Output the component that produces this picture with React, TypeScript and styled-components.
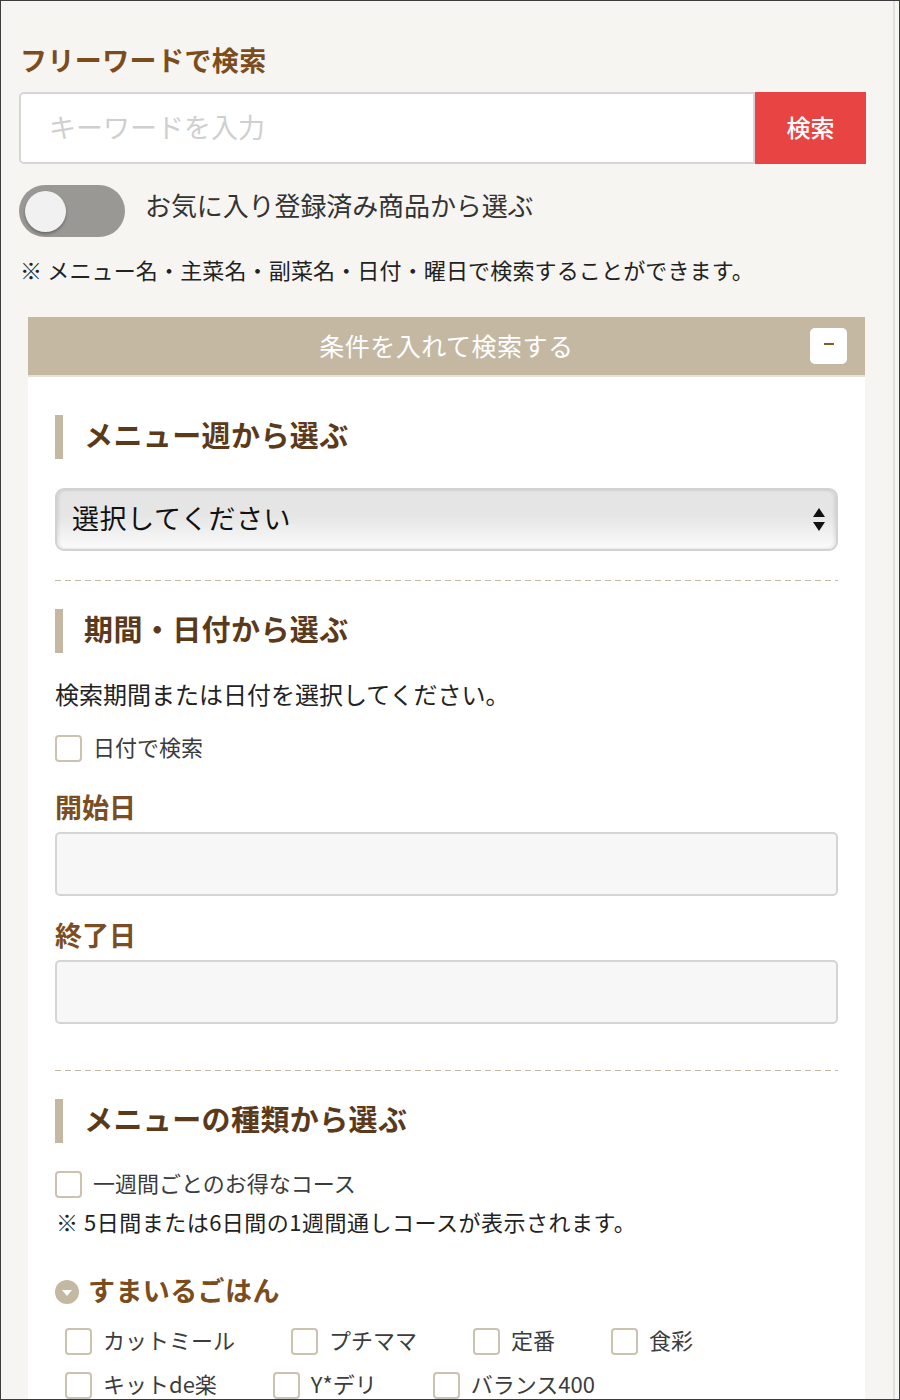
import React from "react";
import styled, { createGlobalStyle } from "styled-components";

const Global = createGlobalStyle`
  html, body { margin: 0; padding: 0; background: #f6f5f1; }
  * { box-sizing: border-box; }
  body { font-family: "Noto Sans CJK JP", "Noto Sans", sans-serif; color: #222; }
`;

const FONT = `"Noto Sans CJK JP", "Noto Sans", sans-serif`;

const Frame = styled.div`
  width: 900px;
  height: 1400px;
  border: 1px solid #3c3c3c;
  background: #f6f5f1;
  overflow: hidden;
  display: flex;
`;

const Content = styled.div`
  flex: 1;
  margin-right: 4px;
  border-right: 2px solid #e3e1dc;
  display: flex;
  flex-direction: column;
`;

const Top = styled.div`
  padding: 42px 27px 0 18px;
  display: flex;
  flex-direction: column;
`;

const Title = styled.h2`
  margin: 0;
  font: 700 27px/34px ${FONT};
  color: #7b4d1d;
  padding-left: 1px;
  letter-spacing: 0.4px;
`;

const SearchRow = styled.div`
  margin-top: 15px;
  display: flex;
  height: 72px;
`;

const KeywordInput = styled.input`
  flex: 1;
  min-width: 0;
  height: 72px;
  border: 2px solid #d6d6d6;
  border-radius: 5px 0 0 5px;
  background: #fff;
  padding: 0 0 4px 28px;
  font: 400 27px ${FONT};
  color: #333;
  outline: none;
  &::placeholder { color: #cfcfcf; }
`;

const SearchButton = styled.button`
  width: 111px;
  height: 72px;
  border: none;
  background: #e84444;
  color: #fff;
  font: 500 24px ${FONT};
  padding: 0 0 4px;
`;

const ToggleRow = styled.label`
  margin-top: 21px;
  display: flex;
  align-items: flex-start;
  gap: 20px;
  color: #333;
`;

const ToggleText = styled.span`
  font: 400 26px/40px ${FONT};
  letter-spacing: -0.1px;
`;

const Toggle = styled.span`
  width: 106px;
  height: 52px;
  border-radius: 26px;
  background: #9a9894;
  display: flex;
  align-items: center;
  padding-left: 6px;
  flex-shrink: 0;
`;

const Knob = styled.span`
  width: 41px;
  height: 41px;
  border-radius: 50%;
  background: #f1f1f1;
  box-shadow: 0 2px 3px rgba(0, 0, 0, 0.3);
`;

const Note = styled.p<{ $top?: number; $spacing?: number }>`
  margin: ${(p) => p.$top ?? 18}px 0 0;
  font: 400 22px/28px ${FONT};
  padding-bottom: 4px;
  letter-spacing: ${(p) => p.$spacing ?? 0.15}px;
  color: #222;
  padding-left: 1px;
`;

const Panel = styled.section`
  margin: 30px 28px 0 27px;
  background: #fff;
  flex: 1;
  display: flex;
  flex-direction: column;
`;

const PanelHeader = styled.div`
  height: 60px;
  background: #c4b8a3;
  border-bottom: 2px solid #e6e2da;
  display: flex;
  align-items: center;
  justify-content: center;
  position: relative;
  color: #fff;
  font: 400 25px ${FONT};
  letter-spacing: 0.5px;
  padding-bottom: 2px;
`;

const CollapseButton = styled.span`
  position: absolute;
  right: 18px;
  top: 11px;
  width: 37px;
  height: 36px;
  border-radius: 5px;
  background: #fff;
  display: flex;
  align-items: center;
  justify-content: center;
  padding-bottom: 4px;
  &::after {
    content: "";
    width: 10px;
    height: 2px;
    background: #8a5a26;
  }
`;

const PanelBody = styled.div`
  padding: 38px 27px 0;
  display: flex;
  flex-direction: column;
`;

const SectionHeading = styled.h3<{ $top?: number }>`
  margin: ${(p) => p.$top ?? 0}px 0 0;
  border-left: 8px solid #c4b8a3;
  padding: 0 0 6px 21px;
  font: 700 29px/38px ${FONT};
  color: #5b3a1b;
  letter-spacing: 0.4px;
`;

const SelectBox = styled.div`
  margin-top: 29px;
  height: 63px;
  border: 2px solid #d2d2d2;
  border-radius: 9px;
  background: linear-gradient(#e4e4e4 0%, #e6e6e6 45%, #fbfbfb 100%);
  box-shadow: inset 2px 0 3px rgba(0, 0, 0, 0.08), inset -2px 0 3px rgba(0, 0, 0, 0.08);
  display: flex;
  align-items: center;
  justify-content: space-between;
  padding: 0 9px 0 15px;
  font: 400 27px ${FONT};
  color: #111;
  letter-spacing: 0.6px;
`;

const SelectText = styled.span`
  padding-bottom: 5px;
`;

const Divider = styled.div<{ $top: number }>`
  margin-top: ${(p) => p.$top}px;
  height: 1px;
  background: repeating-linear-gradient(to right, #c4baa8 0 6px, transparent 6px 10px);
`;

const Desc = styled.p`
  margin: 25px 0 0;
  font: 400 24px/32px ${FONT};
  color: #222;
`;

const CheckRow = styled.label<{ $top: number }>`
  margin-top: ${(p) => p.$top}px;
  display: flex;
  align-items: center;
  gap: 11px;
  color: #3c3c3c;
  height: 26px;
`;

const CheckText = styled.span`
  font: 400 22px/26px ${FONT};
  padding-bottom: 4px;
  white-space: nowrap;
`;

const Box = styled.span`
  width: 27px;
  height: 27px;
  border: 2px solid #cbc2b1;
  border-radius: 4px;
  background: #fff;
  flex-shrink: 0;
`;

const FieldLabel = styled.div<{ $top: number }>`
  margin-top: ${(p) => p.$top}px;
  font: 700 27px/32px ${FONT};
  padding-bottom: 2px;
  color: #7b4d22;
`;

const DateInput = styled.div`
  margin-top: 7px;
  height: 64px;
  border: 2px solid #d4d4d4;
  border-radius: 5px;
  background: #f7f7f7;
`;

const SubHeading = styled.div`
  margin-top: 36px;
  display: flex;
  align-items: center;
  gap: 9px;
  font: 700 27px/34px ${FONT};
  color: #7b4d1d;
  letter-spacing: 0.4px;
`;

const SubHeadingText = styled.span`
  line-height: 30px;
  padding-bottom: 4px;
`;

const CircleIcon = styled.span`
  width: 24px;
  height: 24px;
  border-radius: 50%;
  background: #c4b8a3;
  display: flex;
  align-items: center;
  justify-content: center;
  &::after {
    content: "";
    border-left: 5px solid transparent;
    border-right: 5px solid transparent;
    border-top: 6px solid #fff;
    margin-top: 2px;
  }
`;

const CheckGrid = styled.div`
  margin-top: 19px;
  padding-left: 10px;
  display: flex;
  flex-wrap: wrap;
  column-gap: 56px;
  row-gap: 18px;
`;

const SelectArrows = () => (
  <svg width="16" height="26" viewBox="0 0 16 26">
    <polygon points="8,1 14,10 2,10" fill="#111" />
    <polygon points="2,15 14,15 8,24" fill="#111" />
  </svg>
);

const courses = ["カットミール", "プチママ", "定番", "食彩", "キットde楽", "Y*デリ", "バランス400"];

export default function App() {
  return (
    <>
      <Global />
      <Frame>
        <Content>
          <Top>
            <Title>フリーワードで検索</Title>
            <SearchRow>
              <KeywordInput placeholder="キーワードを入力" />
              <SearchButton>検索</SearchButton>
            </SearchRow>
            <ToggleRow>
              <Toggle>
                <Knob />
              </Toggle>
              <ToggleText>お気に入り登録済み商品から選ぶ</ToggleText>
            </ToggleRow>
            <Note>※ メニュー名・主菜名・副菜名・日付・曜日で検索することができます。</Note>
          </Top>
          <Panel>
            <PanelHeader>
              条件を入れて検索する
              <CollapseButton />
            </PanelHeader>
            <PanelBody>
              <SectionHeading>メニュー週から選ぶ</SectionHeading>
              <SelectBox>
                <SelectText>選択してください</SelectText>
                <SelectArrows />
              </SelectBox>
              <Divider $top={29} />
              <SectionHeading $top={28}>期間・日付から選ぶ</SectionHeading>
              <Desc>検索期間または日付を選択してください。</Desc>
              <CheckRow $top={25}>
                <Box />
                <CheckText>日付で検索</CheckText>
              </CheckRow>
              <FieldLabel $top={30}>開始日</FieldLabel>
              <DateInput />
              <FieldLabel $top={23}>終了日</FieldLabel>
              <DateInput />
              <Divider $top={46} />
              <SectionHeading $top={28}>メニューの種類から選ぶ</SectionHeading>
              <CheckRow $top={28}>
                <Box />
                <CheckText>一週間ごとのお得なコース</CheckText>
              </CheckRow>
              <Note $top={10} $spacing={0.5}>
                ※ 5日間または6日間の1週間通しコースが表示されます。
              </Note>
              <SubHeading>
                <CircleIcon />
                <SubHeadingText>すまいるごはん</SubHeadingText>
              </SubHeading>
              <CheckGrid>
                {courses.map((c) => (
                  <CheckRow key={c} $top={0}>
                    <Box />
                    <CheckText>{c}</CheckText>
                  </CheckRow>
                ))}
              </CheckGrid>
            </PanelBody>
          </Panel>
        </Content>
      </Frame>
    </>
  );
}
